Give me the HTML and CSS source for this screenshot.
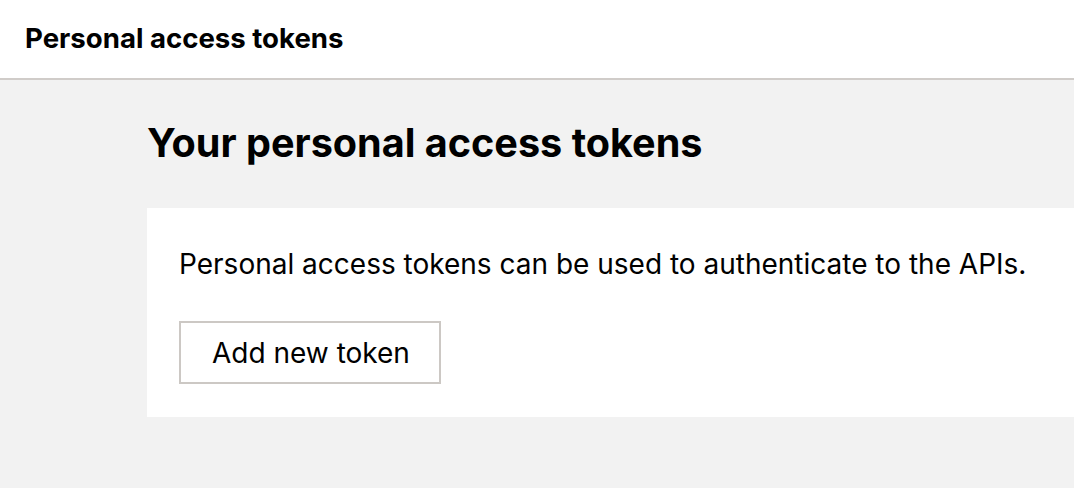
FILE: index.html
```html
<!DOCTYPE html>
<html>
<head>
<meta charset="utf-8">
<link rel="stylesheet" href="styles.css">
</head>
<body>
<header class="topbar">
  <div class="topbar-title">Personal access tokens</div>
</header>
<main class="content">
  <h1 class="page-title">Your personal access tokens</h1>
  <section class="card">
    <p class="card-text">Personal access tokens can be used to authenticate to the APIs.</p>
    <button class="btn">Add new token</button>
  </section>
</main>
</body>
</html>
```
FILE: styles.css
```css
html, body {
  margin: 0;
  padding: 0;
  height: 100%;
}
body {
  font-family: Inter, "Noto Sans", sans-serif;
  background: #f2f2f2;
  color: #000;
  overflow: hidden;
}
.topbar {
  background: #fff;
  border-bottom: 2px solid #d0ccc9;
  padding: 21px 0 0 25px;
  box-sizing: border-box;
  height: 80px;
}
.topbar-title {
  font-size: 27.6px;
  font-weight: 700;
  line-height: 34px;
}
.content {
  padding-left: 147px;
  padding-top: 39px;
}
.page-title {
  margin: 0;
  font-size: 39.6px;
  font-weight: 700;
  line-height: 48px;
}
.card {
  margin-top: 41px;
  background: #fff;
  padding: 32px 32px 33px 32px;
}
.card-text {
  margin: 0;
  font-size: 28px;
  line-height: 48px;
}
.btn {
  margin-top: 33px;
  display: block;
  height: 63px;
  padding: 0 29px 0 31px;
  background: #fff;
  border: 2px solid #ccc8c4;
  font-family: inherit;
  font-size: 28px;
  color: #000;
  border-radius: 0;
}
```
